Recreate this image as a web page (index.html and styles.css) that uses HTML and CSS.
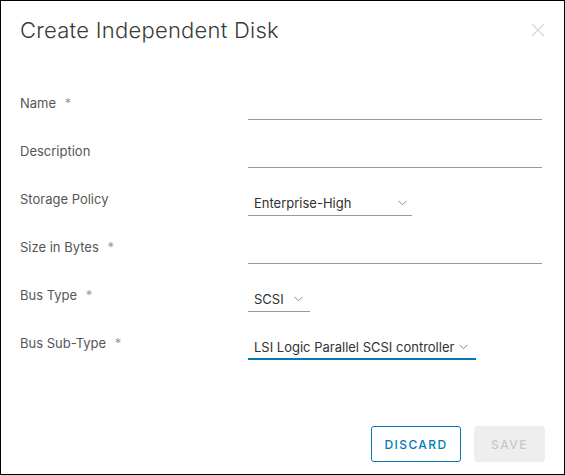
FILE: index.html
```html
<!DOCTYPE html>
<html lang="en">
<head>
<meta charset="utf-8">
<title>Create Independent Disk</title>
<link rel="stylesheet" href="styles.css">
</head>
<body>
<div class="modal">
  <div class="modal-header">
    <h3 class="modal-title">Create Independent Disk</h3>
    <button class="close" aria-label="Close">
      <svg width="14" height="14" viewBox="0 0 14 14"><path d="M1 1 L13 13 M13 1 L1 13" stroke="#dcdcdc" stroke-width="1.6" fill="none"/></svg>
    </button>
  </div>
  <form class="form">
    <div class="row">
      <label class="label">Name <span class="req">*</span></label>
      <div class="input"></div>
    </div>
    <div class="row">
      <label class="label">Description</label>
      <div class="input"></div>
    </div>
    <div class="row">
      <label class="label">Storage Policy</label>
      <div class="select select-policy"><span>Enterprise-High</span><svg class="chev" width="9" height="6" viewBox="0 0 9 6"><path d="M0.5 0.8 L4.5 4.8 L8.5 0.8" stroke="#8a8a8a" stroke-width="1" fill="none"/></svg></div>
    </div>
    <div class="row">
      <label class="label">Size in Bytes <span class="req">*</span></label>
      <div class="input"></div>
    </div>
    <div class="row">
      <label class="label">Bus Type <span class="req">*</span></label>
      <div class="select select-bus"><span>SCSI</span><svg class="chev" width="9" height="6" viewBox="0 0 9 6"><path d="M0.5 0.8 L4.5 4.8 L8.5 0.8" stroke="#8a8a8a" stroke-width="1" fill="none"/></svg></div>
    </div>
    <div class="row">
      <label class="label">Bus Sub-Type <span class="req">*</span></label>
      <div class="select select-sub focused"><span>LSI Logic Parallel SCSI controller</span><svg class="chev" width="9" height="6" viewBox="0 0 9 6"><path d="M0.5 0.8 L4.5 4.8 L8.5 0.8" stroke="#8a8a8a" stroke-width="1" fill="none"/></svg></div>
    </div>
  </form>
  <div class="footer">
    <button class="btn btn-outline">DISCARD</button>
    <button class="btn btn-disabled">SAVE</button>
  </div>
</div>
</body>
</html>
```
FILE: styles.css
```css
* { box-sizing: border-box; }
html, body { margin: 0; padding: 0; background: #fff; }
body { font-family: Inter, "Noto Sans", sans-serif; }
.modal {
  width: 565px;
  height: 475px;
  border: 1px solid #000;
  display: flex;
  flex-direction: column;
  padding: 0 22px 12px 19px;
}
.modal-header {
  display: flex;
  justify-content: space-between;
  align-items: center;
  height: 57px;
}
.modal-title {
  margin: 0;
  font-size: 22px;
  font-weight: 300;
  color: #3a3a3a;
  letter-spacing: 0.25px;
}
.close {
  border: 0;
  background: none;
  padding: 0;
  margin-right: -3px;
  width: 14px;
  height: 14px;
  display: flex;
}
.form {
  margin-top: 30px;
  display: flex;
  flex-direction: column;
}
.row {
  display: grid;
  grid-template-columns: 228px 1fr;
  height: 48px;
  align-items: start;
}
.label {
  margin-top: 5px;
  line-height: 20px;
  font-size: 13px;
  color: #565656;
}
.req { color: #9a9a9a; margin-left: 5px; }
.input {
  height: 32px;
  border-bottom: 1px solid #9a9a9a;
}
.select {
  margin-top: 8px;
  height: 24px;
  border-bottom: 1px solid #9a9a9a;
  display: flex;
  align-items: center;
  justify-content: space-between;
  padding: 0 6px 1px 6px;
  font-size: 13px;
  color: #313131;
}
.select-policy { width: 164px; padding-right: 5px; }
.select-bus { width: 62px; padding-right: 7px; }
.select-sub { width: 228px; padding-right: 8px; }
.select.focused { border-bottom: 2px solid #0079b8; padding-bottom: 0; }
.chev { display: block; }
.footer {
  margin-top: auto;
  display: flex;
  justify-content: flex-end;
  gap: 13px;
  margin-right: -3px;
}
.btn {
  height: 36px;
  border-radius: 3px;
  font-family: inherit;
  font-size: 12px;
  font-weight: 500;
  letter-spacing: 0.12em;
  padding: 0 12px;
}
.btn-outline {
  width: 90px;
  background: #fff;
  border: 1px solid #0079b8;
  color: #0079b8;
}
.btn-disabled {
  width: 71px;
  background: #eee;
  border: 1px solid #eee;
  color: #c8c8c8;
}
```
